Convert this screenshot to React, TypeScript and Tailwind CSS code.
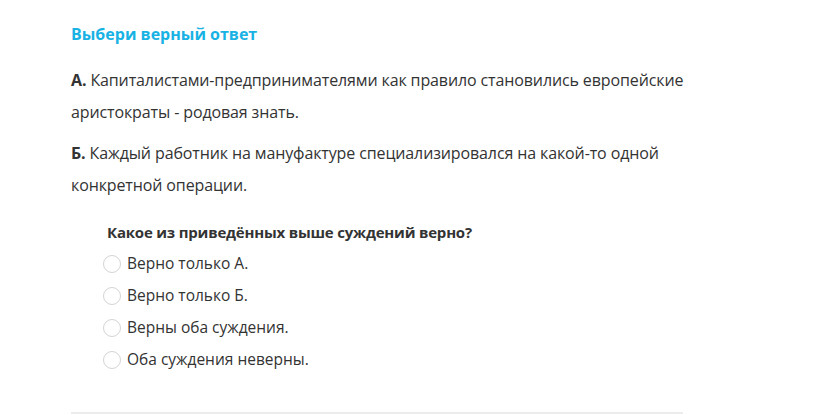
const OPTIONS = [
  'Верно только А.',
  'Верно только Б.',
  'Верны оба суждения.',
  'Оба суждения неверны.',
];

export default function App() {
  return (
    <div
      className="min-h-[415px] bg-white text-[#333333]"
      style={{ fontFamily: '"Open Sans", "Noto Sans", sans-serif' }}
    >
      <div className="w-[612px] ml-[71px] pt-[22px]">
        <h2 className="text-[16px] leading-6 font-bold text-[#18b2e4]">Выбери верный ответ</h2>

        <div className="mt-[18px] w-[640px] text-[16px] leading-8 tracking-[-0.12px]">
          <p>
            <b className="font-bold">А.</b> Капиталистами-предпринимателями как правило становились европейские
            <br />
            аристократы - родовая знать.
          </p>
          <p className="mt-[9px]">
            <b className="font-bold">Б.</b> Каждый работник на мануфактуре специализировался на какой-то одной
            <br />
            конкретной операции.
          </p>
        </div>

        <div className="mt-[15px] pl-[32px]">
          <div className="pl-[4px] text-[15px] leading-8 font-bold tracking-[-0.2px]">
            Какое из приведённых выше суждений верно?
          </div>
          <div className="flex flex-col">
            {OPTIONS.map((o) => (
              <label key={o} className="flex items-center gap-[6px] h-8 text-[15.5px]">
                <span className="w-[18px] h-[18px] rounded-full border border-[#d4d4d4] bg-white" />
                <span>{o}</span>
              </label>
            ))}
          </div>
        </div>

        <div className="mt-[36px] h-[2px] bg-[#ececec]" />
      </div>
    </div>
  );
}
